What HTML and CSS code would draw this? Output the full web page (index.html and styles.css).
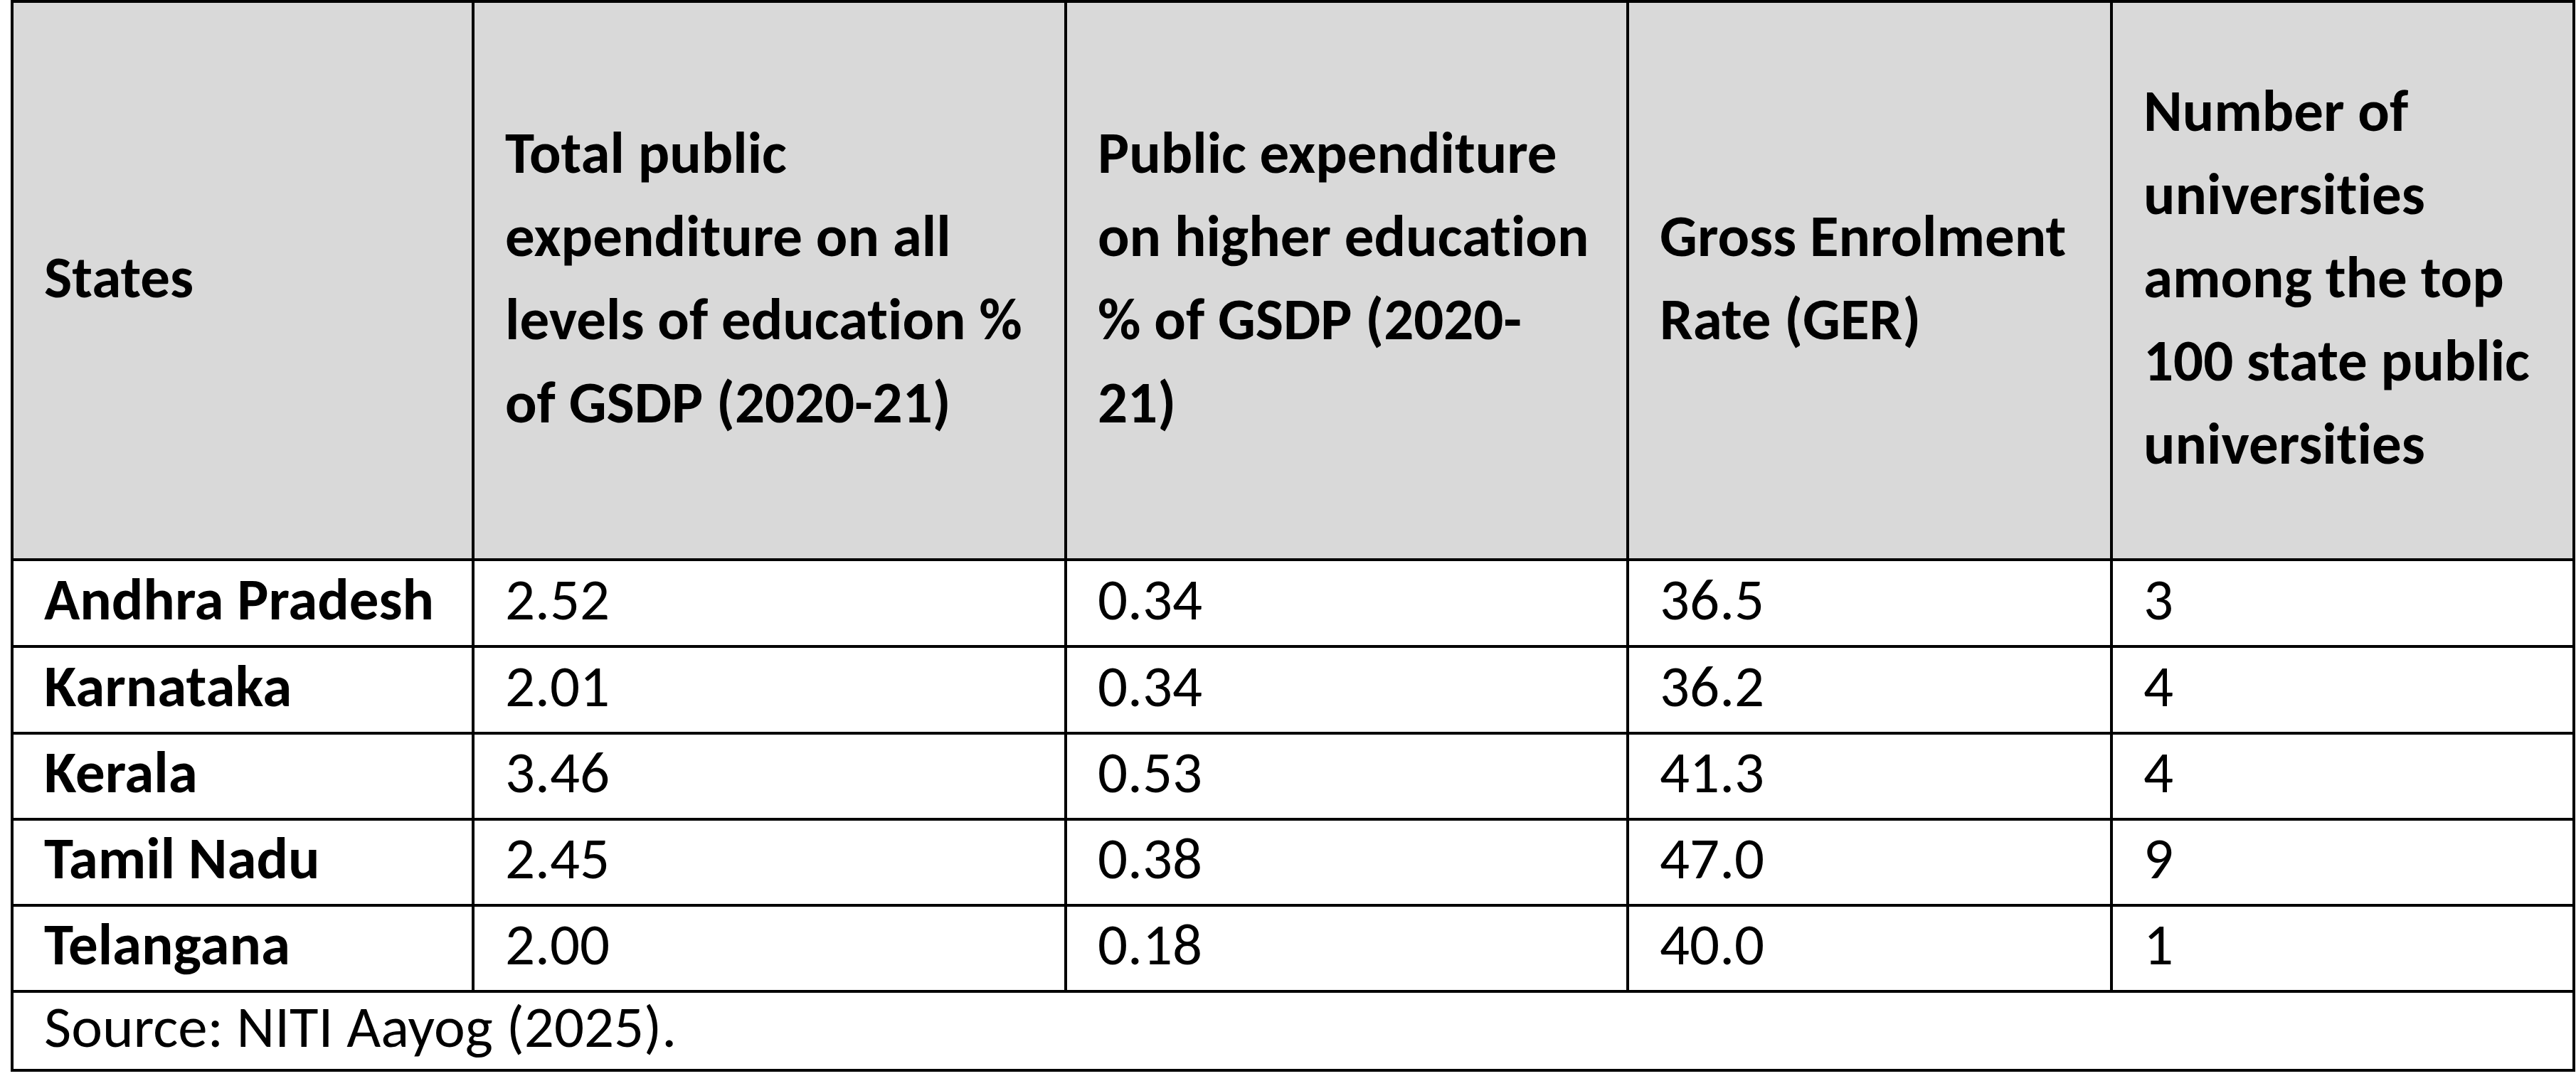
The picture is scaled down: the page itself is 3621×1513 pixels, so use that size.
FILE: index.html
```html
<!DOCTYPE html>
<html lang="en">
<head>
<meta charset="utf-8">
<title>State education indicators</title>
<link rel="stylesheet" href="styles.css">
</head>
<body>
<div class="sheet">
  <div class="grid">
    <div class="cell head">States</div>
    <div class="cell head">Total public<br>expenditure on all<br>levels of education %<br>of GSDP (2020-21)</div>
    <div class="cell head">Public expenditure<br>on higher education<br>% of GSDP (2020-<br>21)</div>
    <div class="cell head">Gross Enrolment<br>Rate (GER)</div>
    <div class="cell head last">Number of<br>universities<br>among the top<br>100 state public<br>universities</div>

    <div class="cell name">Andhra Pradesh</div>
    <div class="cell">2.52</div>
    <div class="cell">0.34</div>
    <div class="cell">36.5</div>
    <div class="cell last">3</div>

    <div class="cell name">Karnataka</div>
    <div class="cell">2.01</div>
    <div class="cell">0.34</div>
    <div class="cell">36.2</div>
    <div class="cell last">4</div>

    <div class="cell name">Kerala</div>
    <div class="cell">3.46</div>
    <div class="cell">0.53</div>
    <div class="cell">41.3</div>
    <div class="cell last">4</div>

    <div class="cell name">Tamil Nadu</div>
    <div class="cell">2.45</div>
    <div class="cell">0.38</div>
    <div class="cell">47.0</div>
    <div class="cell last">9</div>

    <div class="cell name">Telangana</div>
    <div class="cell">2.00</div>
    <div class="cell">0.18</div>
    <div class="cell">40.0</div>
    <div class="cell last">1</div>

    <div class="cell source">Source: NITI Aayog (2025).</div>
  </div>
</div>
</body>
</html>
```

FILE: styles.css
```css
* {
  box-sizing: border-box;
}

html, body {
  margin: 0;
  padding: 0;
  background: #ffffff;
}

body {
  width: 3621px;
  height: 1513px;
  overflow: hidden;
  font-family: Carlito, Calibri, Lato, "Liberation Sans", sans-serif;
  font-variant-ligatures: none;
  font-feature-settings: "liga" 0, "clig" 0;
  color: #000000;
}

.sheet {
  padding-left: 15px;
}

.grid {
  display: grid;
  width: 3605px;
  grid-template-columns: 648px 833px 790px 680px 650px;
  grid-template-rows: 785px 122px 122px 121px 121px 121px 111px;
  border-left: 4px solid #000;
  border-top: 4px solid #000;
}

.cell {
  display: flex;
  align-items: center;
  padding: 0 30px 12px 43px;
  border-right: 4px solid #000;
  border-bottom: 4px solid #000;
  font-size: 83px;
  line-height: 117px;
  white-space: nowrap;
  background: #ffffff;
}

.head {
  background: #d9d9d9;
  font-weight: 700;
  padding-bottom: 10px;
}

.name {
  font-weight: 700;
}

.source {
  grid-column: 1 / -1;
}
```
